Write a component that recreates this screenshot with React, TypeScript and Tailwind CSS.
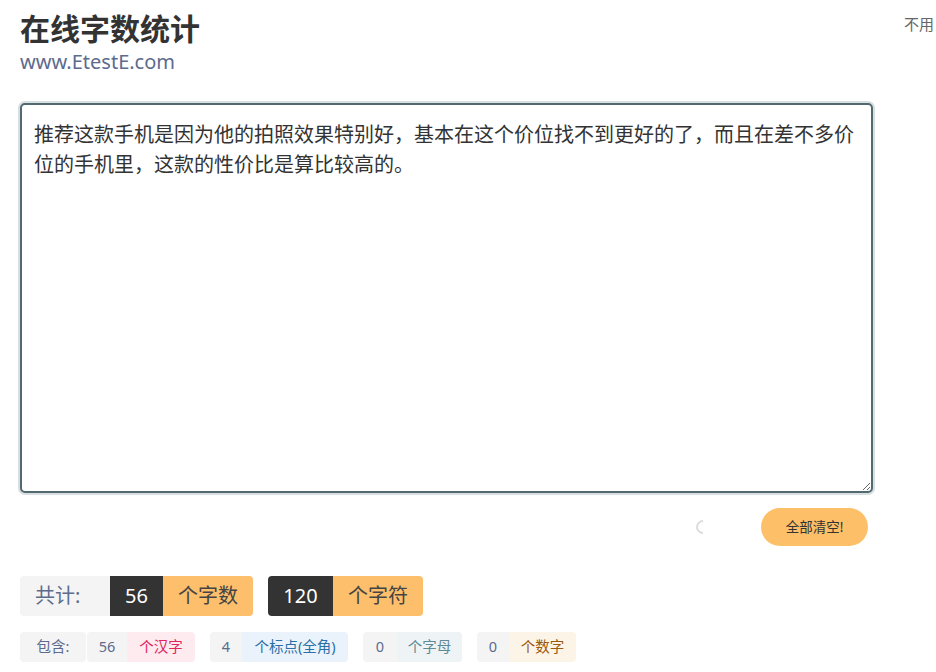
import React from "react";

const font = { fontFamily: '"Noto Sans", "Noto Sans CJK SC", sans-serif' };

export default function App() {
  const text =
    "推荐这款手机是因为他的拍照效果特别好，基本在这个价位找不到更好的了，而且在差不多价位的手机里，这款的性价比是算比较高的。";
  return (
    <div className="relative w-[936px] h-[672px] bg-white overflow-hidden text-[#333]" style={font}>
      <div className="absolute right-[2px] top-[14px] text-[15px] text-[#666] leading-5">不用</div>
      <div className="pl-[20px] pt-[8px] w-[873px]">
        <h1 className="text-[30px] font-bold leading-[42px] text-[#333]">在线字数统计</h1>
        <div className="text-[20px] leading-[24px] text-[#5c6b8e]">www.EtestE.com</div>
        <div className="mt-[29px] h-[390px] rounded-[5px] border-2 border-[#51696f] shadow-[0_0_0_2px_#d7dfe1] bg-white">
          <textarea
            readOnly
            value={text}
            className="w-full h-full resize-y outline-none bg-transparent px-[12px] py-[15px] text-[20px] leading-[30px] text-[#333]"
            style={font}
          />
        </div>
        <div className="flex items-center justify-end mt-[15px] h-[38px] pr-[5px]">
          <div className="w-[14px] h-[14px] rounded-full border-2 border-[#ddd] border-r-transparent border-t-transparent rotate-45 mr-[51px]" />
          <button className="h-[38px] w-[107px] rounded-full bg-[#fdbf67] text-[13.5px] text-[#333]">全部清空!</button>
        </div>
        <div className="flex mt-[30px] gap-[15px] h-[40px] text-[20px]">
          <div className="flex">
            <div className="flex items-center bg-[#f4f4f4] text-[#5c6b8e] rounded-l-[4px] w-[90px] pl-[15px]">共计:</div>
            <div className="flex items-center justify-center bg-[#333] text-white w-[53px]">56</div>
            <div className="flex items-center justify-center bg-[#fdbf6b] text-[#444] w-[90px] rounded-r-[4px]">个字数</div>
          </div>
          <div className="flex">
            <div className="flex items-center justify-center bg-[#333] text-white w-[65px] rounded-l-[4px]">120</div>
            <div className="flex items-center justify-center bg-[#fdbf6b] text-[#444] w-[90px] rounded-r-[4px]">个字符</div>
          </div>
        </div>
        <div className="flex mt-[16px] gap-[15px] h-[30px] text-[14.5px]">
          <div className="flex gap-[1px]">
            <div className="flex items-center justify-center bg-[#f4f4f4] text-[#5c6b8e] w-[66px] rounded-[4px]">包含:</div>
            <div className="flex">
              <div className="flex items-center justify-center bg-[#f4f4f4] text-[#5c6b8e] w-[40px] rounded-l-[4px]">56</div>
              <div className="flex items-center justify-center bg-[#fdebef] text-[#e0245e] w-[68px] rounded-r-[4px]">个汉字</div>
            </div>
          </div>
          <div className="flex">
            <div className="flex items-center justify-center bg-[#f4f4f4] text-[#5c6b8e] w-[32px] rounded-l-[4px]">4</div>
            <div className="flex items-center justify-center bg-[#eaf3fb] text-[#2a6fa8] w-[106px] rounded-r-[4px]">个标点(全角)</div>
          </div>
          <div className="flex">
            <div className="flex items-center justify-center bg-[#f4f4f4] text-[#5c6b8e] w-[34px] rounded-l-[4px]">0</div>
            <div className="flex items-center justify-center bg-[#eef3f5] text-[#5f8a99] w-[65px] rounded-r-[4px]">个字母</div>
          </div>
          <div className="flex">
            <div className="flex items-center justify-center bg-[#f4f4f4] text-[#5c6b8e] w-[32px] rounded-l-[4px]">0</div>
            <div className="flex items-center justify-center bg-[#fdf4e8] text-[#9a5a10] w-[67px] rounded-r-[4px]">个数字</div>
          </div>
        </div>
      </div>
    </div>
  );
}
